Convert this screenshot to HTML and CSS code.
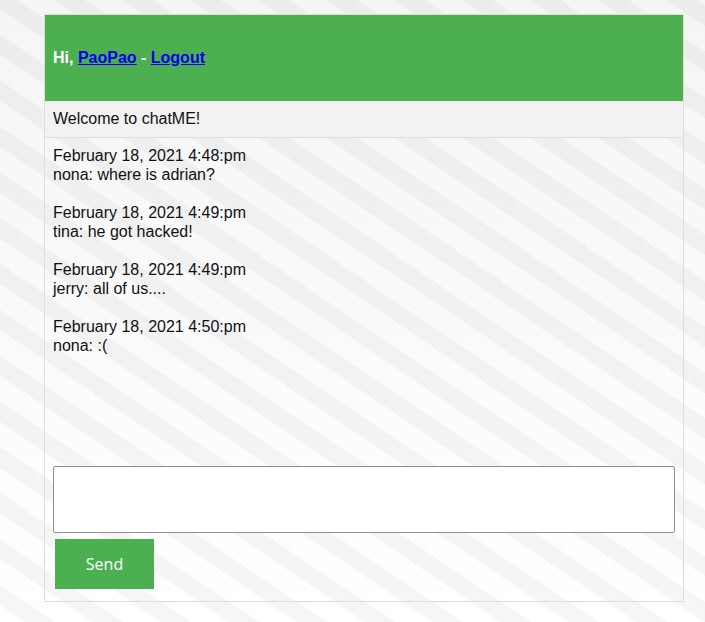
FILE: index.html
```html
<!DOCTYPE html>
<html>
<head>
<meta charset="utf-8">
<title>chatME</title>
<link rel="stylesheet" href="styles.css">
</head>
<body>
<div class="wrapper">
  <div class="menu">
    <p class="welcome">Hi, <a href="#">PaoPao</a> - <a href="#">Logout</a></p>
  </div>
  <div class="title">Welcome to chatME!</div>
  <div class="chatbox">
    <div class="msg">February 18, 2021 4:48:pm<br>nona: where is adrian?</div>
    <div class="msg">February 18, 2021 4:49:pm<br>tina: he got hacked!</div>
    <div class="msg">February 18, 2021 4:49:pm<br>jerry: all of us....</div>
    <div class="msg">February 18, 2021 4:50:pm<br>nona: :(</div>
  </div>
  <form class="form">
    <textarea class="input"></textarea>
    <button type="button" class="send">Send</button>
  </form>
</div>
</body>
</html>
```
FILE: styles.css
```css
html, body {
  margin: 0;
  padding: 0;
  height: 100%;
}
body {
  font-family: "Liberation Sans", Arial, sans-serif;
  font-size: 16px;
  color: #111;
  background:
    repeating-linear-gradient(34deg, rgba(0,0,0,0) 0 14px, rgba(0,0,0,0.036) 14px 31px, rgba(0,0,0,0) 31px 38px),
    linear-gradient(to bottom, #f5f5f5, #ffffff);
  background-attachment: fixed;
}
.wrapper {
  box-sizing: border-box;
  width: 640px;
  margin: 14px 0 0 44px;
  border: 1px solid #dddddd;
}
.menu {
  background: #4caf50;
  padding: 34px 8px;
}
.welcome {
  margin: 0;
  color: #fff;
  font-weight: bold;
  line-height: 18px;
}
.welcome a {
  color: #0000ee;
}
.title {
  background: #f2f2f2;
  padding: 9px 8px;
  line-height: 18px;
  border-bottom: 1px solid #dddddd;
}
.chatbox {
  box-sizing: border-box;
  height: 320px;
  padding: 8px;
  line-height: 19px;
}
.msg {
  margin-bottom: 19px;
}
.form {
  display: flex;
  flex-direction: column;
  align-items: flex-start;
  padding: 8px 8px 12px;
  margin: 0;
}
.input {
  box-sizing: border-box;
  width: 100%;
  height: 67px;
  border: 1px solid #8f8f9d;
  border-radius: 2px;
  background: #fff;
  resize: none;
  margin: 0;
}
.send {
  width: 99px;
  height: 50px;
  margin: 6px 0 0 2px;
  background: #4caf50;
  color: #fff;
  border: none;
  font-family: "Open Sans", sans-serif;
  font-size: 16px;
}
```
